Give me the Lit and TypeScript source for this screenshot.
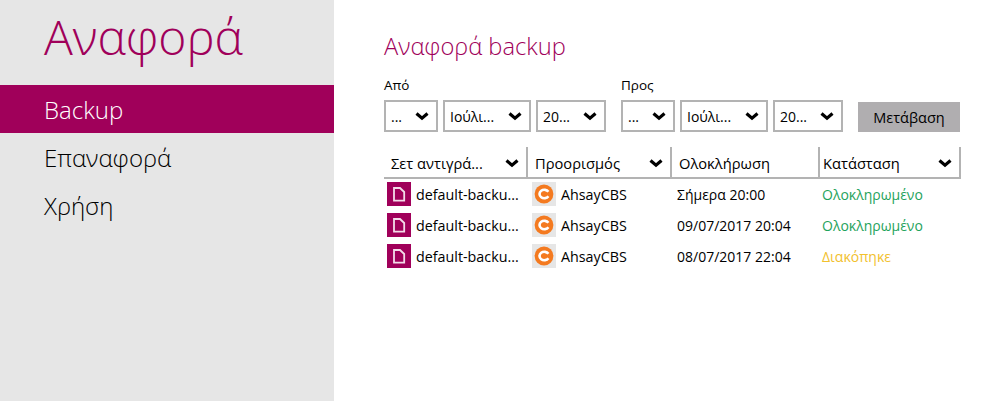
import { LitElement, html, css, svg } from "lit";
import { customElement } from "lit/decorators.js";

const chev = html`<svg class="chev" width="14" height="10" viewBox="0 0 14 10"><path d="M1.5 2.6 L7 7.2 L12.5 2.6" fill="none" stroke="#000" stroke-width="3.2"/></svg>`;
const fileIcon = svg`<svg width="24" height="24" viewBox="0 0 24 24"><rect width="24" height="24" fill="#a0005a"/><path d="M7 6 H13 L17.2 10 V18.6 H7 Z" fill="none" stroke="#f3dce9" stroke-width="1.8"/></svg>`;
const cbsIcon = svg`<svg width="24" height="24" viewBox="0 0 24 24"><rect width="24" height="24" fill="#e6e6e6"/><circle cx="12" cy="12" r="9.4" fill="#f47a20"/><path d="M16.4 9.8 A4.8 4.2 0 1 0 16.4 14.2" fill="none" stroke="#fff" stroke-width="2.6"/></svg>`;

const rows = [
  ["Σήμερα 20:00", "Ολοκληρωμένο", "ok"],
  ["09/07/2017 20:04", "Ολοκληρωμένο", "ok"],
  ["08/07/2017 22:04", "Διακόπηκε", "warn"],
];

@customElement("app-root")
export class AppRoot extends LitElement {
  static styles = css`
    :host { display: block; width: 995px; height: 401px; overflow: hidden; background: #fff;
      font-family: "Open Sans", sans-serif; font-size: 14px; color: #000; }
    .page { display: flex; height: 401px; }
    .side { width: 334px; flex: none; background: #e6e6e6; }
    .brand { font-weight: 300; font-size: 48px; line-height: 68px; height: 85px; padding: 3px 0 0 44px; box-sizing: border-box; color: #a0005a; }
    .nav { font-weight: 300; font-size: 24px; height: 48px; line-height: 50px; padding-left: 44px; color: #000; }
    .nav.on { background: #a0005a; color: #fff; }
    .main { flex: 1; padding: 30px 35px 0 50px; min-width: 0; }
    h1 { margin: 0; font-weight: 300; font-size: 23.7px; line-height: 32px; color: #a0005a; }
    .filters { display: flex; align-items: flex-end; margin-top: 13px; }
    .grp { margin-right: 15px; }
    .lbl { font-size: 13.5px; line-height: 21px; height: 25px; }
    .sels { display: flex; gap: 5px; }
    .sel { box-sizing: border-box; height: 32px; border: 2px solid #b3b3b3; display: flex; align-items: center; justify-content: space-between; padding: 0 7px 0 5px; font-size: 14px; }
    .sel .t { white-space: nowrap; }
    .d { width: 54px; } .m { width: 88px; } .y { width: 70px; }
    .go { box-sizing: border-box; width: 102px; height: 30px; background: #b0aeb0; color: #000; display: flex; align-items: center; justify-content: center; font-size: 14.5px; }
    .grid { display: grid; grid-template-columns: 144px 144px 148px 141px; margin-top: 15px; }
    .th { box-sizing: border-box; height: 32px; border-bottom: 2px solid #b3b3b3; border-right: 2px solid #b3b3b3; display: flex; align-items: center; justify-content: space-between; padding: 1px 7px 0 7px; font-size: 14.7px; font-weight: 400; }
    .th.last { padding-left: 3px; }
    .td { box-sizing: border-box; height: 31px; display: flex; align-items: center; gap: 5px; padding: 0 0 1px 3px; font-size: 14px; white-space: nowrap; }
    .td svg { flex: none; }
    .td.set { font-size: 14.3px; }
    .td.dest { padding-left: 4px; font-size: 14.3px; }
    .td.date { padding-left: 5px; }
    .td.st { padding-left: 2px; }
    .ok { color: #1fa35c; } .warn { color: #f2c12e; }
  `;
  render() {
    const group = (label: string) => html`<div class="grp"><div class="lbl">${label}</div><div class="sels">
      <div class="sel d"><span class="t">...</span>${chev}</div>
      <div class="sel m"><span class="t">Ιούλι...</span>${chev}</div>
      <div class="sel y"><span class="t">20...</span>${chev}</div></div></div>`;
    return html`<div class="page">
      <div class="side">
        <div class="brand">Αναφορά</div>
        <div class="nav on">Backup</div>
        <div class="nav">Επαναφορά</div>
        <div class="nav">Χρήση</div>
      </div>
      <div class="main">
        <h1>Αναφορά backup</h1>
        <div class="filters">${group("Από")}${group("Προς")}<div class="go">Μετάβαση</div></div>
        <div class="grid">
          <div class="th"><span>Σετ αντιγρά...</span>${chev}</div>
          <div class="th"><span>Προορισμός</span>${chev}</div>
          <div class="th"><span>Ολοκλήρωση</span></div>
          <div class="th last"><span>Κατάσταση</span>${chev}</div>
          ${rows.map((r) => html`
            <div class="td set">${fileIcon}<span>default-backu...</span></div>
            <div class="td dest">${cbsIcon}<span>AhsayCBS</span></div>
            <div class="td date">${r[0]}</div>
            <div class="td st ${r[2]}">${r[1]}</div>`)}
        </div>
      </div>
    </div>`;
  }
}
